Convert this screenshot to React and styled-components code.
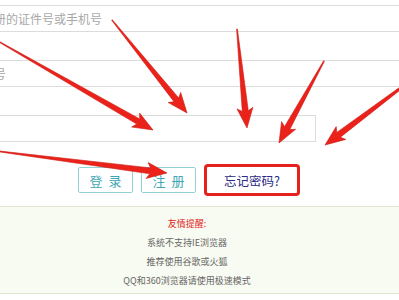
import styled, { createGlobalStyle } from "styled-components";

const GlobalStyle = createGlobalStyle`
    html, body {
        margin: 0;
        padding: 0;
        overflow: hidden;
        background: #ffffff;
        font-family: "Noto Sans CJK SC", "Liberation Sans", sans-serif;
    }
`;

const arrows = [
    { from: [-4, 40], to: [153, 130] },
    { from: [112, 20], to: [187, 113] },
    { from: [237, 29], to: [247, 128] },
    { from: [324, 61], to: [279, 143] },
    { from: [430, 66], to: [325, 145] },
    { from: [-4, 151], to: [167, 173] },
];

function arrowPoints(from, to) {
    const dx = to[0] - from[0];
    const dy = to[1] - from[1];
    const len = Math.hypot(dx, dy);
    const ux = dx / len, uy = dy / len;
    const nx = -uy, ny = ux;
    const headLen = 17;
    const bx = to[0] - ux * headLen, by = to[1] - uy * headLen;
    const p = (x, y) => `${x.toFixed(1)},${y.toFixed(1)}`;
    return [
        p(from[0] + nx * 0.4, from[1] + ny * 0.4),
        p(bx + nx * 3, by + ny * 3),
        p(bx + nx * 8 - ux * 3, by + ny * 8 - uy * 3),
        p(to[0], to[1]),
        p(bx - nx * 8 - ux * 3, by - ny * 8 - uy * 3),
        p(bx - nx * 3, by - ny * 3),
        p(from[0] - nx * 0.4, from[1] - ny * 0.4),
    ].join(" ");
}

function Arrows() {
    return (
        <Overlay width="399" height="300" viewBox="0 0 399 300">
            {arrows.map((a, i) => (
                <polygon key={i} points={arrowPoints(a.from, a.to)} fill="#ea2219" stroke="#cc1a12" strokeWidth="0.6" strokeLinejoin="round" />
            ))}
        </Overlay>
    );
}

function App() {
    return (
        <>
            <GlobalStyle />
            <Screen>
                <Page>
                    <Form>
                        <Input placeholder="请输入您注册的证件号或手机号" />
                        <Input placeholder="请输入手机号" />
                        <Input short />
                        <Actions>
                            <Button>登录</Button>
                            <Button>注册</Button>
                            <Forgot>忘记密码?</Forgot>
                        </Actions>
                    </Form>
                    <Notice>
                        <Title>友情提醒:</Title>
                        <Line>系统不支持IE浏览器</Line>
                        <Line>推荐使用谷歌或火狐</Line>
                        <Line>QQ和360浏览器请使用极速模式</Line>
                    </Notice>
                </Page>
                <Arrows />
            </Screen>
        </>
    );
}

const Screen = styled.div`
    position: relative;
    width: 399px;
    height: 300px;
    overflow: hidden;
`;

const Page = styled.div`
    margin-left: -78px;
    width: 530px;
    padding-top: 5px;
`;

const Form = styled.div`
    display: flex;
    flex-direction: column;
    gap: 28px;
`;

const Input = styled.input`
    box-sizing: border-box;
    width: ${p => (p.short ? "394px" : "100%")};
    height: 27px;
    margin: 0;
    padding: 0 0 0 11px;
    border: 1px solid #dcdcdc;
    outline: none;
    font-family: "Noto Sans CJK SC", sans-serif;
    font-size: 12px;
    color: #333;
    background: #fff;

    &::placeholder {
        color: #a8a8a8;
    }
`;

const Actions = styled.div`
    display: flex;
    align-items: center;
    gap: 8px;
    padding-left: 156px;
    margin-top: -6px;
    height: 32px;
`;

const Button = styled.div`
    box-sizing: border-box;
    width: 55px;
    height: 26px;
    display: flex;
    align-items: center;
    justify-content: center;
    border: 1px solid #93d1d3;
    border-radius: 2px;
    color: #3fa6b3;
    font-size: 13px;
    letter-spacing: 6px;
    text-indent: 6px;
    background: #fff;
`;

const Forgot = styled.div`
    box-sizing: border-box;
    width: 96px;
    height: 32px;
    display: flex;
    align-items: center;
    justify-content: center;
    border: 3px solid #e5221c;
    border-radius: 4px;
    color: #2a2a86;
    font-size: 12.5px;
`;

const Notice = styled.div`
    box-sizing: border-box;
    margin-top: 10px;
    height: 88px;
    padding-top: 7px;
    display: flex;
    flex-direction: column;
    align-items: center;
    background: #f8fbf1;
    border-top: 1px solid #dfe7d2;
    border-bottom: 1px solid #dfe7d2;
    font-size: 9px;
    line-height: 19px;
    color: #666;
`;

const Title = styled.div`
    color: #e31b1b;
`;

const Line = styled.div``;

const Overlay = styled.svg`
    position: absolute;
    left: 0;
    top: 0;
    pointer-events: none;
`;

export default App;
